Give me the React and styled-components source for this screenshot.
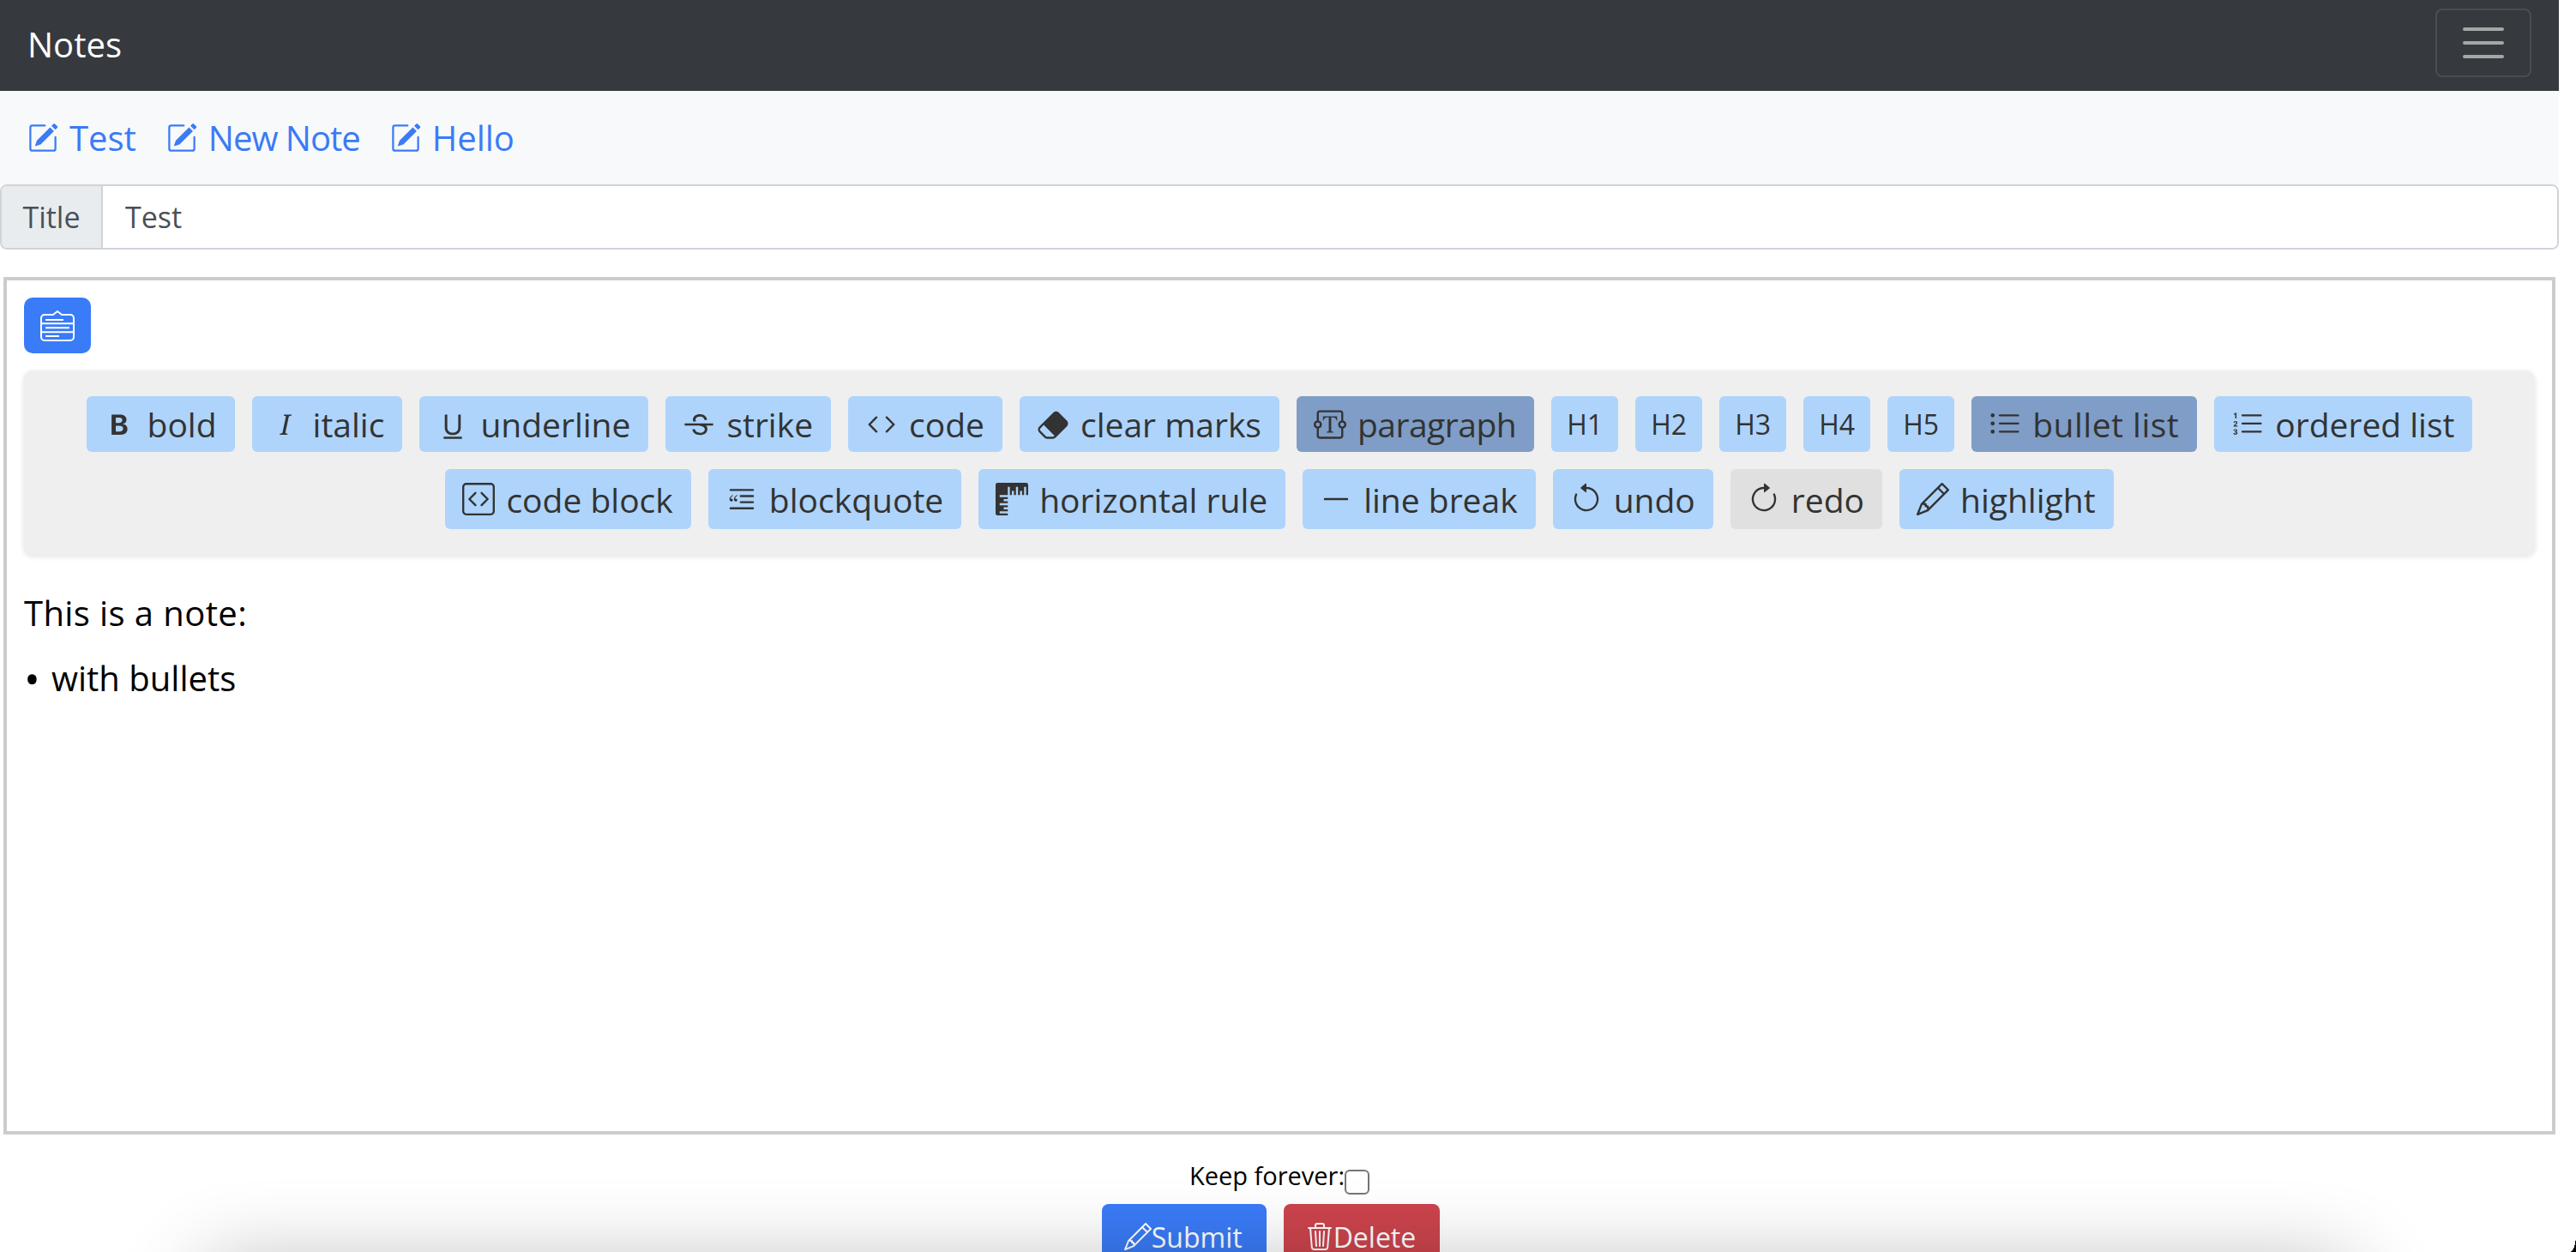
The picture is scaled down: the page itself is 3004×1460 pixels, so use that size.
import React from "react";
import styled, { createGlobalStyle } from "styled-components";
import {
  BsArrowClockwise,
  BsArrowCounterclockwise,
  BsBlockquoteLeft,
  BsCode,
  BsCodeSquare,
  BsDashLg,
  BsEraserFill,
  BsListOl,
  BsListUl,
  BsPencil,
  BsPencilSquare,
  BsRulers,
  BsTextareaT,
  BsTrash3,
  BsTypeBold,
  BsTypeItalic,
  BsTypeStrikethrough,
  BsTypeUnderline,
} from "react-icons/bs";

const GlobalStyle = createGlobalStyle`
  html, body {
    margin: 0;
    height: 1460px;
    overflow: hidden;
    background: #fff;
    font-family: "Open Sans", "Noto Sans", sans-serif;
  }
  * { box-sizing: border-box; }
`;

const firstRow = [
  { label: "bold", icon: BsTypeBold },
  { label: "italic", icon: BsTypeItalic },
  { label: "underline", icon: BsTypeUnderline },
  { label: "strike", icon: BsTypeStrikethrough },
  { label: "code", icon: BsCode },
  { label: "clear marks", icon: BsEraserFill },
  { label: "paragraph", icon: BsTextareaT, active: true, tracking: -0.5 },
  { label: "H1", heading: true },
  { label: "H2", heading: true },
  { label: "H3", heading: true },
  { label: "H4", heading: true },
  { label: "H5", heading: true },
  { label: "bullet list", icon: BsListUl, active: true, tracking: 0.5 },
  { label: "ordered list", icon: BsListOl },
];

const secondRow = [
  { label: "code block", icon: BsCodeSquare },
  { label: "blockquote", icon: BsBlockquoteLeft },
  { label: "horizontal rule", icon: BsRulers },
  { label: "line break", icon: BsDashLg },
  { label: "undo", icon: BsArrowCounterclockwise },
  { label: "redo", icon: BsArrowClockwise, disabled: true },
  { label: "highlight", icon: BsPencil },
];

const notes = [
  { title: "Test", tracking: 0 },
  { title: "New Note", tracking: -1 },
  { title: "Hello", tracking: 0 },
];

const MenuRow = ({ items, $tall }) => (
  <Row>
    {items.map(({ label, icon: Icon, active, disabled, heading, tracking }) => (
      <MenuButton
        key={label}
        $active={active}
        $disabled={disabled}
        $heading={heading}
        $tall={$tall}
        $tracking={tracking || 0}
      >
        {Icon && <Icon size={38} />}
        <span>{label}</span>
      </MenuButton>
    ))}
  </Row>
);

const NoteIcon = () => (
  <svg width="40" height="36" viewBox="-1 -1 40 36" fill="none" stroke="#fff" strokeWidth="2">
    <path d="M4 4h10l5-4 5 4h10a4 4 0 0 1 4 4v22a4 4 0 0 1-4 4H4a4 4 0 0 1-4-4V8a4 4 0 0 1 4-4z" />
    <path d="M0 14.3h38M0 24.3h38" />
    <path d="M5 10h21M5 19.3h28M5 29h16" />
  </svg>
);

const App = () => (
  <>
    <GlobalStyle />
    <Page>
      <Navbar>
        <Brand>Notes</Brand>
        <Toggler>
          <span />
          <span />
          <span />
        </Toggler>
      </Navbar>
      <NoteBar>
        {notes.map(({ title, tracking }) => (
          <NoteLink key={title} $tracking={tracking}>
            <BsPencilSquare size={36} />
            {title}
          </NoteLink>
        ))}
      </NoteBar>
      <InputGroup>
        <InputLabel>Title</InputLabel>
        <InputValue>Test</InputValue>
      </InputGroup>
      <Editor>
        <NoteIconButton>
          <NoteIcon />
        </NoteIconButton>
        <MenuBar>
          <MenuRow items={firstRow} />
          <MenuRow items={secondRow} $tall />
        </MenuBar>
        <Content>
          <p>This is a note:</p>
          <Bullets>
            <li>with bullets</li>
          </Bullets>
        </Content>
      </Editor>
      <Footer>
        <KeepRow>
          Keep forever:
          <Checkbox type="checkbox" />
        </KeepRow>
        <Actions>
          <ActionButton $color="#3a7bf7">
            <BsPencil size={32} />
            Submit
          </ActionButton>
          <ActionButton $color="#cc444d">
            <BsTrash3 size={32} />
            Delete
          </ActionButton>
        </Actions>
      </Footer>
    </Page>
    <WindowShadow />
    <WindowCorner />
  </>
);

export default App;

const Page = styled.div`
  width: 2984px;
`;

const Navbar = styled.nav`
  height: 106px;
  background: #363a3e;
  display: flex;
  align-items: center;
  justify-content: space-between;
  padding: 0 32px;
`;

const Brand = styled.div`
  color: #fff;
  font-size: 40px;
  margin-top: -4px;
`;

const Toggler = styled.div`
  width: 112px;
  height: 80px;
  margin-top: -6px;
  border: 2px solid rgba(255, 255, 255, 0.1);
  border-radius: 8px;
  display: flex;
  flex-direction: column;
  align-items: center;
  justify-content: center;
  gap: 12px;

  span {
    width: 48px;
    height: 4px;
    border-radius: 2px;
    background: rgba(255, 255, 255, 0.55);
  }
`;

const NoteBar = styled.div`
  height: 109px;
  background: #f8f9fa;
  display: flex;
  align-items: center;
  gap: 35px;
  padding: 0 32px;
`;

const NoteLink = styled.a`
  display: flex;
  align-items: center;
  gap: 13px;
  font-size: 40px;
  letter-spacing: ${(p) => p.$tracking}px;
  color: #3a7bf7;
`;

const InputGroup = styled.div`
  height: 76px;
  display: flex;
  border: 2px solid #ced4da;
  border-radius: 8px;
  overflow: hidden;
  font-size: 34px;
`;

const InputLabel = styled.div`
  width: 118px;
  background: #e9ecef;
  border-right: 2px solid #ced4da;
  color: #495057;
  display: flex;
  align-items: center;
  justify-content: center;
`;

const InputValue = styled.div`
  flex: 1;
  background: #fff;
  color: #495057;
  display: flex;
  align-items: center;
  padding-left: 26px;
`;

const Editor = styled.div`
  height: 1000px;
  margin: 32px 4px 0;
  border: 4px solid #ccc;
  padding: 20px 20px 0;
`;

const NoteIconButton = styled.div`
  width: 78px;
  height: 65px;
  background: #3a7bf7;
  border-radius: 10px;
  display: flex;
  align-items: center;
  justify-content: center;
`;

const MenuBar = styled.div`
  height: 215px;
  margin-top: 20px;
  padding: 30px 0;
  background: #efefef;
  border-radius: 10px;
  box-shadow: 0 2px 6px rgba(0, 0, 0, 0.12);
  display: flex;
  flex-direction: column;
  gap: 20px;
`;

const Row = styled.div`
  display: flex;
  justify-content: center;
  gap: 20px;
`;

const MenuButton = styled.div`
  height: ${(p) => (p.$tall ? "70px" : "65px")};
  width: ${(p) => (p.$heading ? "78px" : "auto")};
  padding: 0 ${(p) => (p.$heading ? "20px" : "21px")} 0 20px;
  display: flex;
  align-items: center;
  justify-content: center;
  gap: 13px;
  font-size: ${(p) => (p.$heading ? "32px" : "39px")};
  letter-spacing: ${(p) => p.$tracking}px;
  color: #333;
  white-space: nowrap;
  border-radius: 6px;
  background: ${(p) =>
    p.$active ? "#7f9dc6" : p.$disabled ? "#e0e0e0" : "#aed4fb"};
`;

const Content = styled.div`
  margin-top: 40px;
  font-size: 40px;
  color: #000;

  p {
    margin: 0;
    height: 76px;
    letter-spacing: 0.4px;
  }
`;

const Bullets = styled.ul`
  margin: 0;
  padding: 0;
  list-style: none;

  li {
    display: flex;
    align-items: center;
  }

  li::before {
    content: "•";
    width: 32px;
    font-size: 50px;
    line-height: 54px;
  }
`;

const Footer = styled.div`
  margin-top: 31px;
  display: flex;
  flex-direction: column;
  align-items: center;
`;

const KeepRow = styled.label`
  display: flex;
  align-items: flex-start;
  font-size: 29px;
  line-height: 34px;
  color: #000;
  height: 50px;
`;

const Checkbox = styled.input`
  appearance: none;
  width: 29px;
  height: 29px;
  margin: 10px 0 0;
  background: #fff;
  border: 2px solid #767676;
  border-radius: 6px;
`;

const Actions = styled.div`
  display: flex;
  gap: 20px;
  margin-right: 20px;
`;

const ActionButton = styled.div`
  height: 76px;
  padding: 0 28px 0 26px;
  display: flex;
  align-items: center;
  font-size: 32px;
  color: #fff;
  border-radius: 8px;
  background: ${(p) => p.$color};
`;

const WindowShadow = styled.div`
  position: fixed;
  left: 260px;
  right: 284px;
  top: 1500px;
  height: 40px;
  box-shadow: 0 0 100px 20px rgba(0, 0, 0, 0.32);
`;

const WindowCorner = styled.div`
  position: fixed;
  right: 0;
  bottom: 0;
  width: 7px;
  height: 20px;
  background: radial-gradient(ellipse 7px 20px at 0 0, transparent 98%, #000 100%);
`;
